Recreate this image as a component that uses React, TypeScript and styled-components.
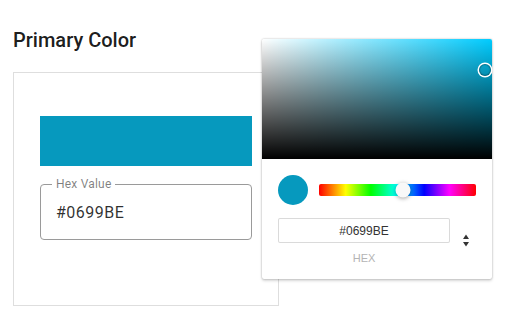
import React from 'react';
import styled, { createGlobalStyle } from 'styled-components';

const GlobalStyle = createGlobalStyle`
  html, body {
    margin: 0;
    padding: 0;
    background: #ffffff;
  }
  body {
    font-family: Roboto, "Liberation Sans", Arial, sans-serif;
  }
`;

const Page = styled.div`
  position: relative;
  width: 511px;
  height: 324px;
  box-sizing: border-box;
  padding: 28px 13px 0;
  overflow: hidden;
`;

const Heading = styled.h2`
  margin: 0 0 20px;
  font-size: 20px;
  line-height: 24px;
  font-weight: 500;
  color: rgba(0, 0, 0, 0.9);
`;

const Card = styled.div`
  width: 266px;
  box-sizing: border-box;
  border: 1px solid #dedede;
  padding: 43px 26px 65px;
`;

const Swatch = styled.div<{ $color: string }>`
  height: 50px;
  background: ${p => p.$color};
`;

const HexField = styled.div`
  position: relative;
  margin-top: 18px;
  height: 56px;
  box-sizing: border-box;
  border: 1px solid #9a9a9a;
  border-radius: 4px;
  padding: 0 15px;
  display: flex;
  align-items: center;
`;

const FieldLabel = styled.span`
  position: absolute;
  top: -8px;
  left: 11px;
  padding: 0 4px;
  background: #ffffff;
  font-size: 12px;
  line-height: 14px;
  color: rgba(0, 0, 0, 0.5);
  letter-spacing: 0.2px;
`;

const FieldValue = styled.span`
  font-size: 16px;
  color: rgba(0, 0, 0, 0.82);
  letter-spacing: 0.5px;
`;

// chrome-style colour picker popover
const Picker = styled.div`
  position: absolute;
  top: 39px;
  left: 262px;
  width: 230px;
  background: #ffffff;
  border-radius: 2px;
  box-shadow: 0 0 2px rgba(0, 0, 0, 0.3), 0 2px 3px rgba(0, 0, 0, 0.15);
  font-family: "Liberation Sans", Arial, sans-serif;
`;

const Saturation = styled.div<{ $hue: string }>`
  position: relative;
  height: 120px;
  border-radius: 2px 2px 0 0;
  background:
    linear-gradient(to top, #000000, rgba(0, 0, 0, 0)),
    linear-gradient(to right, #ffffff, rgba(255, 255, 255, 0)),
    ${p => p.$hue};
`;

const SatPointer = styled.div`
  position: absolute;
  width: 12px;
  height: 12px;
  border-radius: 50%;
  transform: translate(-6px, -6px);
  box-shadow: 0 0 0 1.5px #ffffff, inset 0 0 1px 1px rgba(0, 0, 0, 0.3);
`;

const Body = styled.div`
  padding: 16px 16px 15px;
`;

const Controls = styled.div`
  display: flex;
  align-items: center;
  height: 30px;
`;

const ColorDot = styled.div<{ $color: string }>`
  width: 30px;
  height: 30px;
  border-radius: 50%;
  background: ${p => p.$color};
  margin-right: 11px;
  flex-shrink: 0;
`;

const HueTrack = styled.div`
  position: relative;
  flex: 1;
  height: 12px;
  border-radius: 2px;
  background: linear-gradient(
    to right,
    #ff0000 0%,
    #ffff00 17%,
    #00ff00 33%,
    #00ffff 50%,
    #0000ff 67%,
    #ff00ff 83%,
    #ff0000 100%
  );
`;

const HueThumb = styled.div`
  position: absolute;
  top: 50%;
  width: 15px;
  height: 15px;
  border-radius: 50%;
  background: #f8f8f8;
  transform: translate(-7.5px, -7.5px);
  box-shadow: 0 1px 4px 0 rgba(0, 0, 0, 0.37);
`;

const Fields = styled.div`
  display: flex;
  margin-top: 13px;
`;

const FieldColumn = styled.div`
  flex: 1;
  display: flex;
  flex-direction: column;
  align-items: center;
`;

const HexInput = styled.input`
  width: 100%;
  height: 25px;
  box-sizing: border-box;
  border: none;
  outline: none;
  border-radius: 2px;
  box-shadow: inset 0 0 0 1px #dadada;
  text-align: center;
  font-family: "Liberation Sans", Arial, sans-serif;
  font-size: 12px;
  color: #333333;
  background: #ffffff;
`;

const HexLabel = styled.span`
  margin-top: 10px;
  font-size: 11px;
  line-height: 11px;
  color: #b4b4b4;
  text-transform: uppercase;
`;

const Toggle = styled.div`
  width: 26px;
  padding-left: 6px;
  box-sizing: border-box;
  display: flex;
  justify-content: center;
  padding-top: 16px;
`;

const hex = '#0699BE';

export default function App() {
  return (
    <>
      <GlobalStyle />
      <Page>
        <Heading>Primary Color</Heading>
        <Card>
          <Swatch $color={hex} />
          <HexField>
            <FieldLabel>Hex Value</FieldLabel>
            <FieldValue>{hex}</FieldValue>
          </HexField>
        </Card>

        <Picker>
          <Saturation $hue="#00ccff">
            <SatPointer style={{ left: '96.8%', top: '25.5%' }} />
          </Saturation>
          <Body>
            <Controls>
              <ColorDot $color={hex} />
              <HueTrack>
                <HueThumb style={{ left: `${(192 / 360) * 100}%` }} />
              </HueTrack>
            </Controls>
            <Fields>
              <FieldColumn>
                <HexInput readOnly value={hex} />
                <HexLabel>hex</HexLabel>
              </FieldColumn>
              <Toggle>
                <svg width="8" height="13" viewBox="0 0 8 13">
                  <path d="M4 0.5 L7 5 L1 5 Z" fill="#333" />
                  <path d="M4 12.5 L7 8 L1 8 Z" fill="#333" />
                </svg>
              </Toggle>
            </Fields>
          </Body>
        </Picker>
      </Page>
    </>
  );
}
